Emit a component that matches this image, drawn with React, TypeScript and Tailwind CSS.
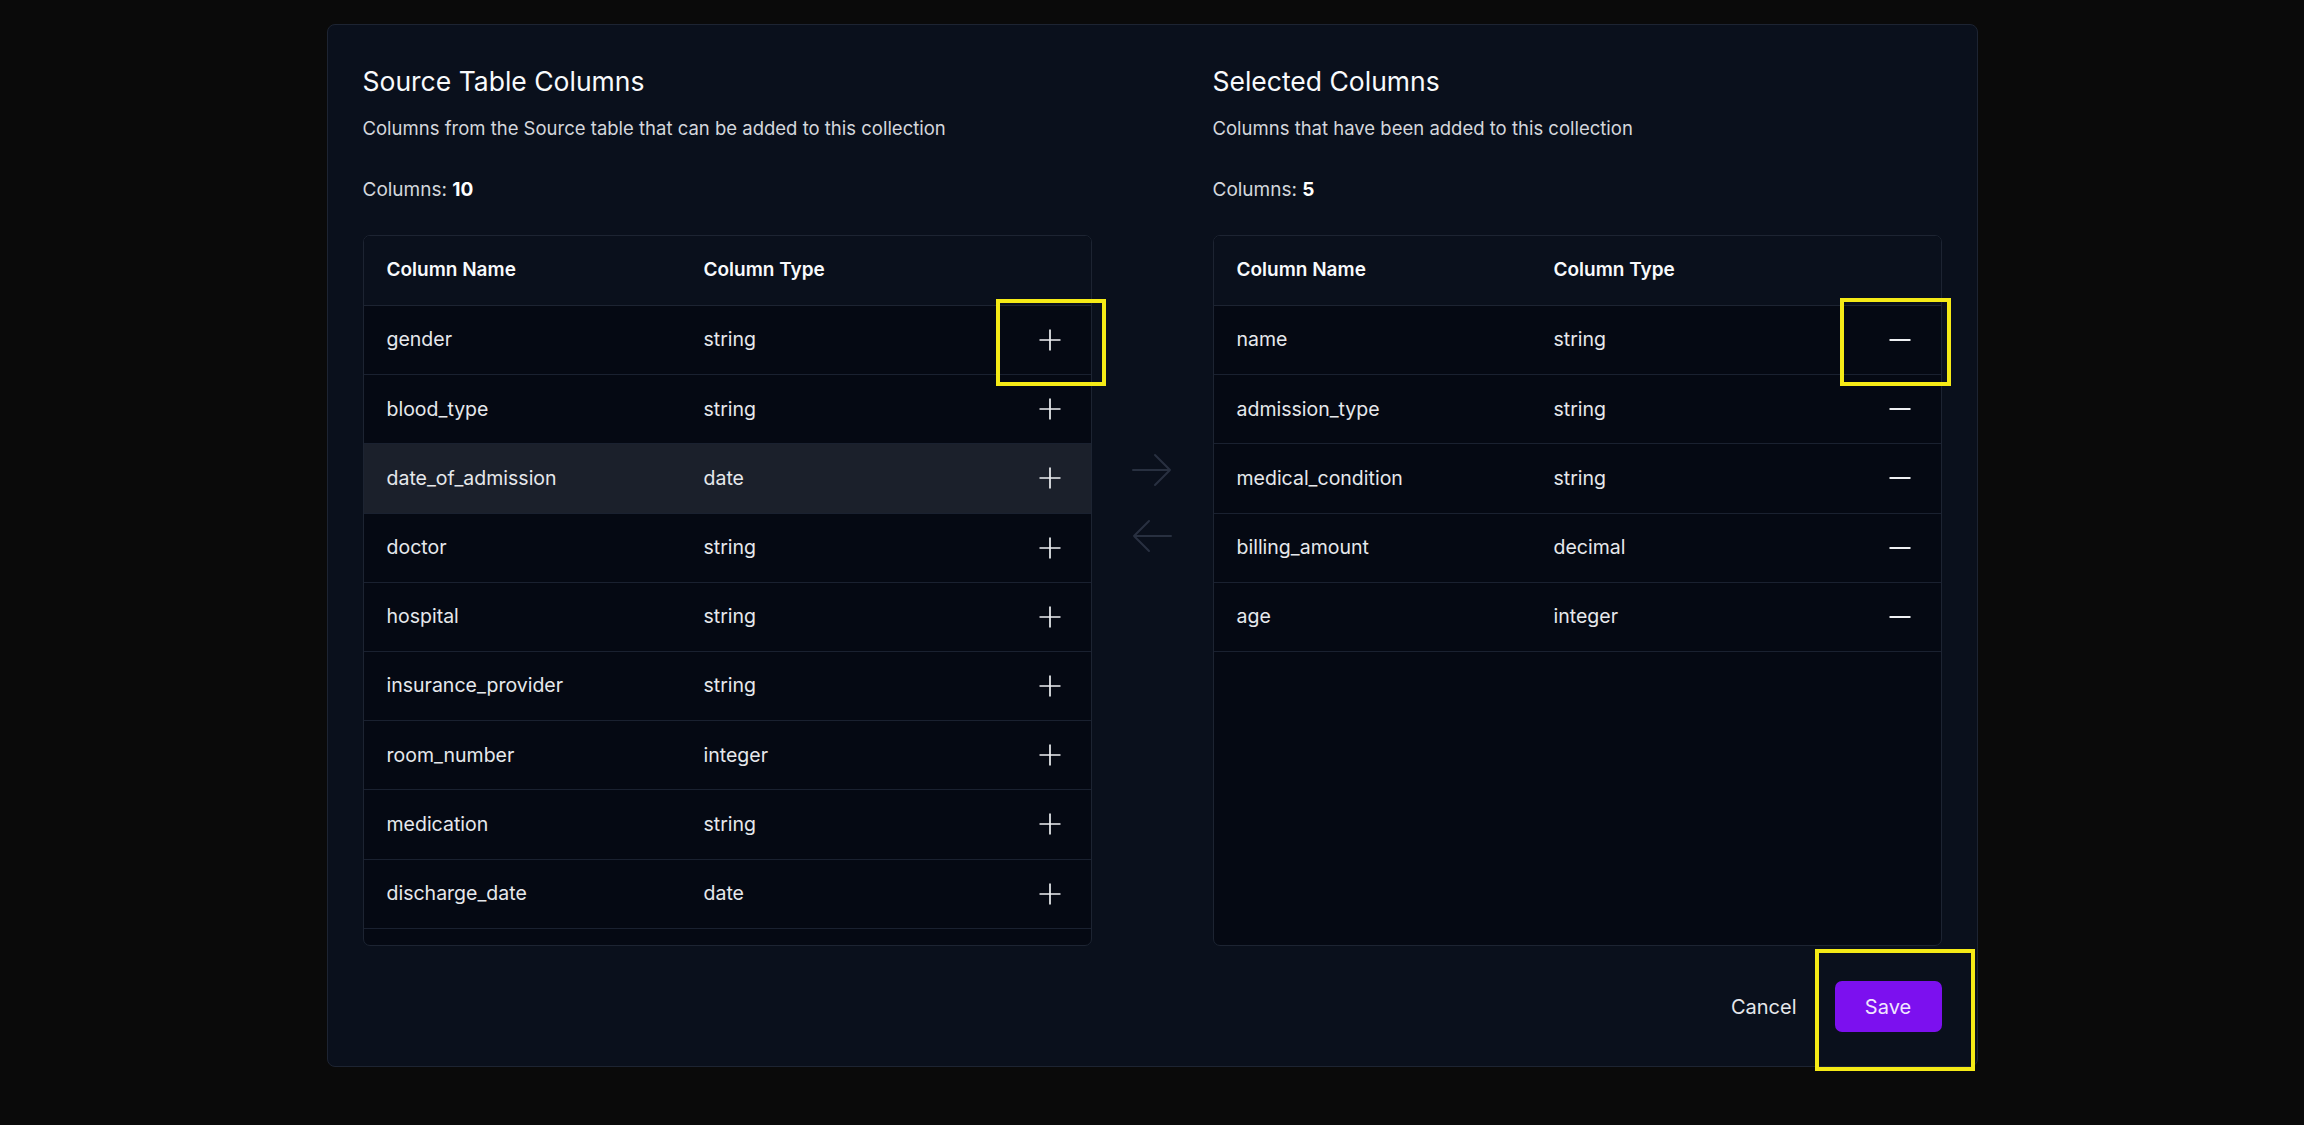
import React from "react";

type Col = { name: string; type: string };

const source: Col[] = [
  { name: "gender", type: "string" },
  { name: "blood_type", type: "string" },
  { name: "date_of_admission", type: "date" },
  { name: "doctor", type: "string" },
  { name: "hospital", type: "string" },
  { name: "insurance_provider", type: "string" },
  { name: "room_number", type: "integer" },
  { name: "medication", type: "string" },
  { name: "discharge_date", type: "date" },
];

const selected: Col[] = [
  { name: "name", type: "string" },
  { name: "admission_type", type: "string" },
  { name: "medical_condition", type: "string" },
  { name: "billing_amount", type: "decimal" },
  { name: "age", type: "integer" },
];

function PlusIcon() {
  return (
    <svg width="22" height="22" viewBox="0 0 22 22" fill="none">
      <path d="M11 0.5V21.5M0.5 11H21.5" stroke="#eef0f3" strokeWidth="1.7" />
    </svg>
  );
}

function MinusIcon() {
  return (
    <svg width="22" height="22" viewBox="0 0 22 22" fill="none">
      <path d="M0.5 11H21.5" stroke="#eef0f3" strokeWidth="2" />
    </svg>
  );
}

function Table({ rows, kind }: { rows: Col[]; kind: "add" | "remove" }) {
  return (
    <div className="h-[711px] w-[729px] overflow-hidden rounded-[7px] border border-[#1d2432] bg-[#050913] flex flex-col">
      <div className="flex h-[70px] shrink-0 items-center border-b border-[#1d2432] bg-[#0a101c] text-[19px] font-semibold text-[#f8fafc]">
        <div className="w-[340px] pl-[23px]">Column Name</div>
        <div className="flex-1">Column Type</div>
      </div>
      {rows.map((r, i) => (
        <div
          key={r.name}
          className={
            "flex h-[69.2px] shrink-0 items-center border-b border-[#1a2130] text-[19.5px] text-[#e6e8ec] " +
            (kind === "add" && i === 2 ? "bg-[#1b202b]" : "bg-[#050913]")
          }
        >
          <div className="w-[340px] pl-[23px]">{r.name}</div>
          <div className="flex-1">{r.type}</div>
          <div className="flex w-[82px] items-center justify-center">
            {kind === "add" ? <PlusIcon /> : <MinusIcon />}
          </div>
        </div>
      ))}
    </div>
  );
}

function Panel({
  title,
  subtitle,
  count,
  children,
}: {
  title: string;
  subtitle: string;
  count: number;
  children: React.ReactNode;
}) {
  return (
    <div className="flex w-[729px] flex-col">
      <h2 className="text-[26.5px] leading-[32px] font-normal text-[#f8fafc]">{title}</h2>
      <p className="mt-[19px] text-[18.5px] leading-[24px] text-[#d4d7dd]">{subtitle}</p>
      <p className="mt-[38px] text-[19px] leading-[24px] text-[#d4d7dd]">
        Columns: <span className="font-bold text-white">{count}</span>
      </p>
      <div className="mt-[33px]">{children}</div>
    </div>
  );
}

function ArrowRight() {
  return (
    <svg width="40" height="34" viewBox="0 0 40 34" fill="none">
      <path d="M1 17H38M23 2L38 17L23 32" stroke="#283040" strokeWidth="2" strokeLinecap="round" strokeLinejoin="round" />
    </svg>
  );
}

function ArrowLeft() {
  return (
    <svg width="40" height="34" viewBox="0 0 40 34" fill="none">
      <path d="M39 17H2M17 2L2 17L17 32" stroke="#283040" strokeWidth="2" strokeLinecap="round" strokeLinejoin="round" />
    </svg>
  );
}

export default function App() {
  return (
    <div className="min-h-screen w-full bg-[#0a0a0a] pt-[24px] font-[Inter,sans-serif]">
      <div className="relative mx-auto flex w-[1651px] flex-col rounded-[8px] border border-[#1d2432] bg-[#0a101c] px-[35px] pt-[40px] pb-[34px]">
        <div className="flex">
          <Panel
            title="Source Table Columns"
            subtitle="Columns from the Source table that can be added to this collection"
            count={10}
          >
            <Table rows={source} kind="add" />
          </Panel>
          <div className="flex w-[121px] flex-col items-center gap-[32px] pt-[388px]">
            <ArrowRight />
            <ArrowLeft />
          </div>
          <Panel
            title="Selected Columns"
            subtitle="Columns that have been added to this collection"
            count={5}
          >
            <Table rows={selected} kind="remove" />
          </Panel>
        </div>
        <div className="mt-[35px] flex items-center justify-end gap-[38px]">
          <button className="text-[20px] text-[#e5e7eb]">Cancel</button>
          <button className="h-[51px] w-[107px] rounded-[7px] bg-[#7c10ef] text-[20px] text-[#f1e6ff]">
            Save
          </button>
        </div>

        <div className="pointer-events-none absolute left-[668px] top-[274px] h-[87px] w-[110px] border-4 border-[#f5ea16]" />
        <div className="pointer-events-none absolute left-[1512px] top-[273px] h-[88px] w-[111px] border-4 border-[#f5ea16]" />
        <div className="pointer-events-none absolute left-[1487px] top-[924px] h-[122px] w-[160px] border-4 border-[#f5ea16]" />
      </div>
    </div>
  );
}
